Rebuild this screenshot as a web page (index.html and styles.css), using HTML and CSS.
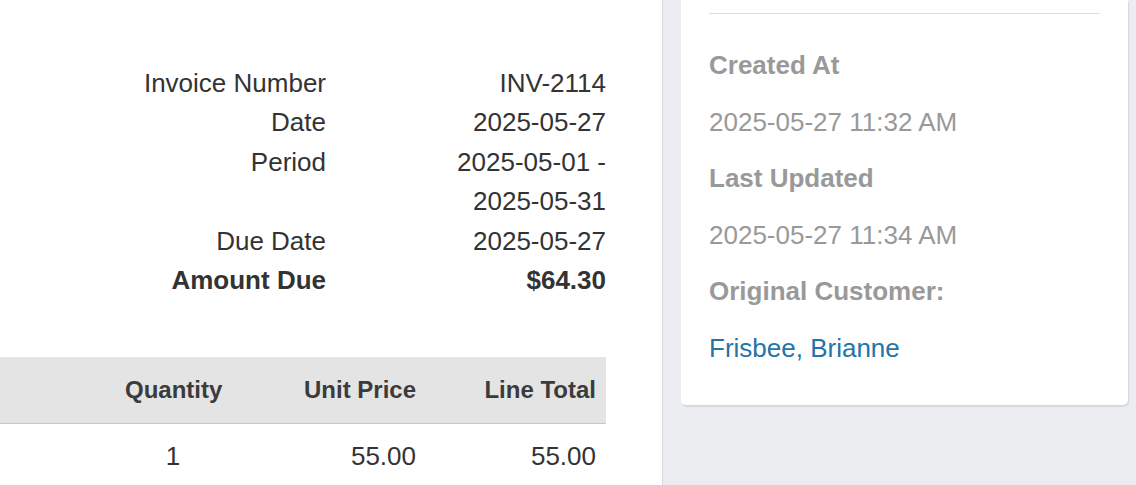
FILE: index.html
```html
<!DOCTYPE html>
<html lang="en">
<head>
    <meta charset="UTF-8">
    <meta name="viewport" content="width=device-width, initial-scale=1.0">
    <title>Invoice INV-2114</title>
    <link rel="stylesheet" href="styles.css">
</head>

<body>
    <div class="layout">
        <div class="invoice-panel">
            <div class="invoice-info">
                <div class="info-label">Invoice Number</div>
                <div class="info-value">INV-2114</div>

                <div class="info-label">Date</div>
                <div class="info-value">2025-05-27</div>

                <div class="info-label">Period</div>
                <div class="info-value">2025-05-01 - 2025-05-31</div>

                <div class="info-label">Due Date</div>
                <div class="info-value">2025-05-27</div>

                <div class="info-label total">Amount Due</div>
                <div class="info-value total">$64.30</div>
            </div>

            <table class="line-items">
                <thead>
                    <tr>
                        <th class="col-desc"></th>
                        <th class="col-qty">Quantity</th>
                        <th class="col-price">Unit Price</th>
                        <th class="col-total">Line Total</th>
                    </tr>
                </thead>
                <tbody>
                    <tr>
                        <td></td>
                        <td class="qty">1</td>
                        <td>55.00</td>
                        <td>55.00</td>
                    </tr>
                </tbody>
            </table>
        </div>

        <div class="side-panel">
            <div class="meta-card">
                <hr class="divider">

                <p class="meta-label">Created At</p>
                <p class="meta-value">2025-05-27 11:32 AM</p>

                <p class="meta-label">Last Updated</p>
                <p class="meta-value">2025-05-27 11:34 AM</p>

                <p class="meta-label">Original Customer:</p>
                <p class="meta-value"><a href="#" class="customer-link">Frisbee, Brianne</a></p>
            </div>
        </div>
    </div>
</body>
</html>
```

FILE: styles.css
```css
body {
    font-family: "Liberation Sans", Arial, sans-serif;
    font-size: 26px;
    color: #333;
    margin: 0;
    background-color: #ecedf0;
}

.layout {
    display: flex;
    height: 100vh;
    overflow: hidden;
}

/* left side: the invoice itself */
.invoice-panel {
    width: 662px;
    flex-shrink: 0;
    background-color: white;
    border-right: 1px solid #dadada;
    padding-top: 64px;
}

.invoice-info {
    display: grid;
    grid-template-columns: 1fr 200px;
    column-gap: 80px;
    width: 606px;
    line-height: 39.4px;
}

.info-label,
.info-value {
    text-align: right;
}

.total {
    font-weight: bold;
}

.line-items {
    width: 606px;
    margin-top: 57px;
    border-collapse: collapse;
    table-layout: fixed;
}

.line-items th {
    background-color: #e4e4e4;
    border-bottom: 1px solid #c9c9c9;
    font-size: 24px;
    line-height: 36px;
    padding: 15px 10px;
    text-align: right;
    color: #3b3b3b;
}

.line-items td {
    padding: 13px 10px;
    line-height: 39px;
    text-align: right;
}

.line-items .col-qty,
.line-items .qty {
    text-align: center;
}

.col-desc {
    width: auto;
}

.col-qty {
    width: 96px;
}

.col-price {
    width: 175px;
}

.col-total {
    width: 160px;
}

/* right side: record details */
.side-panel {
    flex: 1;
    padding: 0 8px 0 18px;
}

.meta-card {
    background-color: white;
    padding: 13px 28px 19px;
    border-radius: 0 0 5px 5px;
    box-shadow: 1px 2px 1px rgba(0, 0, 0, 0.09);
}

.divider {
    border: none;
    border-top: 1px solid #dedede;
    margin: 0 0 32px;
}

.meta-label,
.meta-value {
    margin: 0 0 17.6px;
    line-height: 39px;
    color: #999;
}

.meta-label {
    font-weight: bold;
}

.customer-link {
    color: #2573a7;
    text-decoration: none;
}
```
